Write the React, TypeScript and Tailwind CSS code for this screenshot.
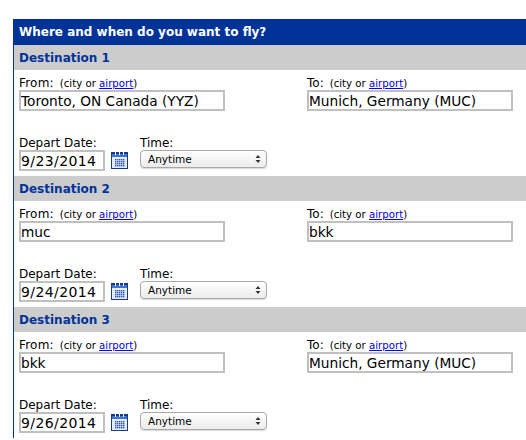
import React from 'react';

const destinations = [
  { title: 'Destination 1', from: 'Toronto, ON Canada (YYZ)', to: 'Munich, Germany (MUC)', date: '9/23/2014' },
  { title: 'Destination 2', from: 'muc', to: 'bkk', date: '9/24/2014' },
  { title: 'Destination 3', from: 'bkk', to: 'Munich, Germany (MUC)', date: '9/26/2014' },
];

const CalendarIcon = () => (
  <svg width="17" height="17" viewBox="0 0 17 17" className="block">
    <rect x="0" y="0" width="17" height="17" fill="#153a8c" />
    <rect x="1" y="4" width="15" height="12" fill="#e4ecf8" />
    <rect x="1" y="2" width="15" height="3" fill="#3f74d0" />
    <rect x="4" y="0" width="1" height="3" fill="#ffffff" />
    <rect x="8" y="0" width="1" height="3" fill="#ffffff" />
    <rect x="12" y="0" width="1" height="3" fill="#ffffff" />
    {[7, 9, 11, 13].map((y) =>
      [4, 6, 8, 10, 12].map((x) => <rect key={`${x}-${y}`} x={x} y={y} width="1.4" height="1.4" fill="#2a52b8" />)
    )}
  </svg>
);

const Hint = () => (
  <span className="ml-[6px] text-[10.2px]">
    (city or <a href="#" className="text-[#0000ee] underline">airport</a>)
  </span>
);

const TextBox = ({ value, className }: { value: string; className: string }) => (
  <input
    readOnly
    value={value}
    className={`block h-[21px] border-2 border-[#c0c0c0] bg-white pl-0 leading-none text-black outline-none ${className}`}
  />
);

const Destination = ({ title, from, to, date }: { title: string; from: string; to: string; date: string }) => (
  <section>
    <h3 className="h-[25px] bg-[#cccccc] pl-[5px] text-[12px] font-bold leading-[26px] text-[#003399]">{title}</h3>
    <div className="h-[106px] pl-[5px] pt-[6px]">
      <div className="flex">
        <div className="w-[288px]">
          <div className="h-[14px] text-[12px] leading-[14px]"><span className="tracking-[0.2px]">From:</span><Hint /></div>
          <TextBox value={from} className="w-[206px] text-[13.7px]" />
        </div>
        <div>
          <div className="h-[14px] text-[12px] leading-[14px]">To:<Hint /></div>
          <TextBox value={to} className="w-[206px] text-[13.7px]" />
        </div>
      </div>
      <div className="mt-[25px] flex">
        <div className="w-[121px]">
          <div className="h-[14px] text-[12px] leading-[14px]">Depart Date:</div>
          <div className="flex items-center gap-[6px]">
            <TextBox value={date} className="w-[86px] text-[14px] tracking-[0.4px]" />
            <CalendarIcon />
          </div>
        </div>
        <div>
          <div className="h-[14px] text-[12px] leading-[14px]">Time:</div>
          <div className="flex h-[18px] w-[127px] items-center justify-between rounded-[4px] border border-[#a8a8a8] bg-gradient-to-b from-white to-[#ececec] pl-[7px] pr-[5px] text-[10.5px] shadow-[0_1px_1px_rgba(0,0,0,0.15)]">
            <span className="pt-[1px]">Anytime</span>
            <svg width="6" height="10" viewBox="0 0 6 10">
              <path d="M3 1 L5.5 4 H0.5 Z M3 9 L0.5 6 H5.5 Z" fill="#333" />
            </svg>
          </div>
        </div>
      </div>
    </div>
  </section>
);

export default function App() {
  return (
    <div className="h-[440px] w-[526px] overflow-hidden bg-white pt-[19px] font-['DejaVu_Sans',Verdana,sans-serif] text-black">
      <div className="ml-[13px] border-l border-[#003399]">
        <h2 className="h-[26px] bg-[#003399] pl-[5px] text-[12px] font-bold leading-[26px] text-white">
          Where and when do you want to fly?
        </h2>
        {destinations.map((d) => (
          <Destination key={d.title} {...d} />
        ))}
      </div>
    </div>
  );
}
